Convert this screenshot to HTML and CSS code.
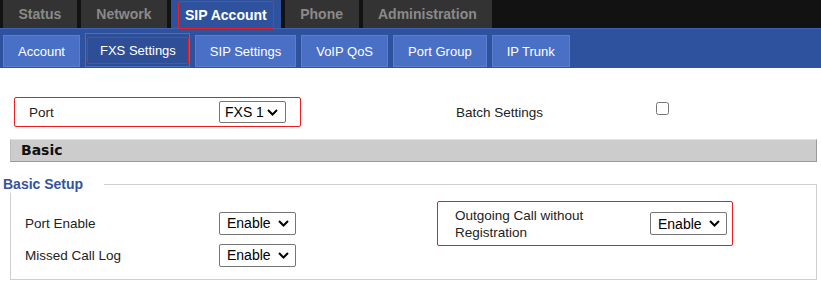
FILE: index.html
```html
<!DOCTYPE html>
<html lang="en">
<head>
<meta charset="utf-8">
<title>FXS Settings</title>
<link rel="stylesheet" href="styles.css">
</head>
<body>
<nav class="topnav">
  <a class="tab">Status</a>
  <a class="tab">Network</a>
  <a class="tab tab-active"><span class="mark tab-mark">SIP Account</span></a>
  <a class="tab">Phone</a>
  <a class="tab">Administration</a>
</nav>
<nav class="subnav">
  <a class="sub">Account</a>
  <a class="sub sub-active"><span class="mark sub-mark">FXS Settings</span></a>
  <a class="sub">SIP Settings</a>
  <a class="sub">VoIP QoS</a>
  <a class="sub">Port Group</a>
  <a class="sub">IP Trunk</a>
</nav>
<main class="content">
  <div class="top-row">
    <div class="cell mark port-cell">
      <span class="label label-port">Port</span>
      <select class="sel sel-port"><option>FXS 1</option></select>
    </div>
    <div class="cell batch-cell">
      <span class="label label-batch">Batch Settings</span>
      <input type="checkbox" class="chk">
    </div>
  </div>
  <div class="section-head">Basic</div>
  <fieldset class="group">
    <legend class="group-title">Basic Setup</legend>
    <div class="grid">
      <div class="cell c1 r1"><span class="label">Port Enable</span><select class="sel"><option>Enable</option></select></div>
      <div class="cell c2 r1 mark out-cell"><span class="label label-wrap">Outgoing Call without Registration</span><select class="sel"><option>Enable</option></select></div>
      <div class="cell c1 r2"><span class="label">Missed Call Log</span><select class="sel"><option>Enable</option></select></div>
    </div>
  </fieldset>
</main>
</body>
</html>
```
FILE: styles.css
```css
* { box-sizing: border-box; }
html, body { margin: 0; padding: 0; background: #fff; }
body {
  font-family: "Liberation Sans", Arial, sans-serif;
  font-size: 13.5px;
  color: #222;
}

.topnav {
  display: flex;
  gap: 4px;
  height: 28px;
  padding-left: 3px;
  background: #121212;
}
.tab {
  display: flex;
  align-items: center;
  padding: 0 15.5px;
  background: #333;
  color: #8a8a8a;
  font-weight: bold;
  font-size: 14px;
}
.tab-active {
  background: #2f529e;
  color: #fff;
  padding: 0 7px;
  align-items: flex-start;
}
.mark { border: 1px solid #ee1c1c; border-radius: 2px; }
.tab-mark {
  display: flex;
  align-items: center;
  height: 28px;
  margin-top: 1px;
  padding: 0 6px;
}

.subnav {
  display: flex;
  align-items: flex-end;
  gap: 5px;
  height: 40px;
  padding: 0 0 1px 3px;
  background: #2f529e;
  border-top: 1px solid #3e63b4;
}
.sub {
  display: flex;
  align-items: center;
  height: 32px;
  padding: 0 14px;
  background: #4a70c6;
  border: 1px solid #5a7fd2;
  color: #fff;
  font-size: 13px;
}
.sub-active {
  height: 34px;
  padding: 3px 0 2px 1px;
  background: #2e4f98;
  border-color: #4a6ec2;
  align-items: stretch;
}
.sub-mark {
  display: flex;
  align-items: center;
  padding: 0 12px 0 12px;
}

.content { padding: 29px 4px 0 10px; }

.top-row {
  display: grid;
  grid-template-columns: 430px 1fr;
  height: 30px;
}
.cell { display: flex; align-items: center; }
.label { flex: 0 0 194px; }
.port-cell {
  margin-left: 4px;
  width: 287px;
  padding-left: 14px;
}
.label-port { flex-basis: 190px; }
.label-batch { padding-left: 16px; flex-basis: 216px; }
.chk {
  margin: 0;
  width: 13px;
  height: 13px;
  align-self: flex-start;
  margin-top: 5px;
}

.sel {
  -webkit-appearance: none;
  appearance: none;
  width: 77px;
  height: 23px;
  padding: 0 0 0 7px;
  font-family: "Liberation Sans", Arial, sans-serif;
  font-size: 14px;
  color: #000;
  background: #fff url("data:image/svg+xml;utf8,<svg xmlns='http://www.w3.org/2000/svg' width='11' height='7'><path d='M1 1l4.5 4.5L10 1' fill='none' stroke='%23000' stroke-width='2'/></svg>") no-repeat right 6px center;
  border: 1px solid #767676;
  border-radius: 2px;
}
.sel-port { width: 67px; height: 22px; padding-left: 5px; background-position: right 7px center; }

.section-head {
  margin-top: 12px;
  height: 23px;
  padding-left: 10px;
  background: #cccccc;
  border: 1px solid #bdbdbd;
  border-top-color: #e2e2e2;
  border-right-color: #9a9a9a;
  border-bottom-color: #9a9a9a;
  font-family: "DejaVu Sans", Verdana, sans-serif;
  font-weight: bold;
  font-size: 14px;
  line-height: 21px;
  color: #111;
}

.group {
  margin: 13px 0 0 0;
  padding: 14px 0 8px 0;
  border: 1px solid #cfcfcf;
  min-width: 0;
}
.group-title {
  margin-left: -8px;
  padding: 0 21px 0 0;
  background: #fff;
  line-height: 18px;
  font-weight: bold;
  font-size: 14px;
  color: #34539e;
}
.grid {
  display: grid;
  grid-template-columns: 429px 1fr;
  grid-auto-rows: 32px;
}
.c1 { grid-column: 1; padding-left: 14px; }
.c2 { grid-column: 2; }
.r1 { grid-row: 1; }
.r2 { grid-row: 2; }
.out-cell {
  justify-self: start;
  width: 296px;
  margin: -6px 0 -7px -3px;
  padding-left: 17px;
}
.out-cell .label { flex-basis: 195px; padding-right: 20px; line-height: 17px; }
```
